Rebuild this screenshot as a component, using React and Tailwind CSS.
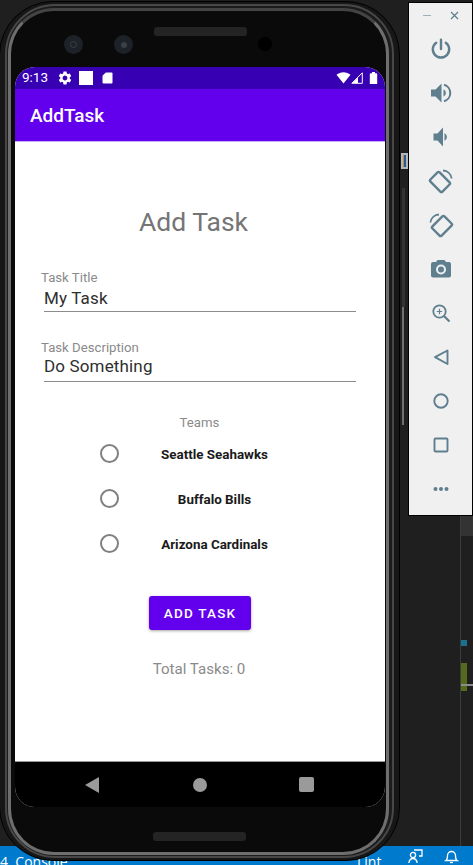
const c = "#5f7f8f";

function Ic({ children, size = 24 }) {
  return <svg width={size} height={size} viewBox={`0 0 ${size} ${size}`} fill="none">{children}</svg>;
}

function RotateIcon({ flip }) {
  return (
    <svg width="26" height="26" viewBox="0 0 26 26" fill="none" style={flip ? { transform: "scaleX(-1)" } : undefined}>
      <rect x="5.500" y="5.500" width="13" height="17" rx="1.500" transform="rotate(-45 12 14)" stroke={c} strokeWidth="2.400" />
      <path d="M15 2.500 C19.500 2.800 23 6 23.600 10.500" stroke={c} strokeWidth="1.800" />
    </svg>
  );
}

const tools = [
  <Ic key="p"><path d="M12 2.800v9.200" stroke={c} strokeWidth="2.400" strokeLinecap="round"/><path d="M7.200 5.700a8.200 8.200 0 1 0 9.600 0" stroke={c} strokeWidth="2.400" strokeLinecap="round"/></Ic>,
  <Ic key="u"><path d="M2 8.500v7h4.500l6 6v-19l-6 6z" fill={c}/><path d="M14.500 8.200a4.200 4.200 0 0 1 0 7.600z" fill={c}/><path d="M15 3.800a8.500 8.500 0 0 1 0 16.400" stroke={c} strokeWidth="2"/></Ic>,
  <Ic key="d"><path d="M4.500 8.500v7h4l5.500 6v-19l-5.500 6z" fill={c}/><path d="M15.500 8a4.500 4.500 0 0 1 0 8z" fill={c}/></Ic>,
  <RotateIcon key="r1" />,
  <RotateIcon key="r2" flip />,
  <Ic key="c"><path fillRule="evenodd" clipRule="evenodd" d="M8.500 3 7 5H4A2 2 0 0 0 2 7v11.500a2 2 0 0 0 2 2h16a2 2 0 0 0 2-2V7a2 2 0 0 0-2-2h-3l-1.500-2zM12 7.500a5 5 0 1 1 0 10 5 5 0 0 1 0-10zm0 2a3 3 0 1 0 0 6 3 3 0 0 0 0-6z" fill={c}/></Ic>,
  <Ic key="z" size={20}><circle cx="8.500" cy="8.500" r="6.200" stroke={c} strokeWidth="1.800"/><path d="M13 13l5.500 5.500" stroke={c} strokeWidth="2.200"/><path d="M5.800 8.500h5.400M8.500 5.800v5.400" stroke={c} strokeWidth="1.200"/></Ic>,
  <Ic key="b" size={20}><path d="M16.500 3.500v13.500L4 10.200z" stroke={c} strokeWidth="1.900" strokeLinejoin="round"/></Ic>,
  <Ic key="h" size={20}><circle cx="10" cy="10" r="6.700" stroke={c} strokeWidth="1.900"/></Ic>,
  <Ic key="s" size={20}><rect x="3.500" y="3.500" width="13" height="13" rx="1" stroke={c} strokeWidth="1.900"/></Ic>,
  <Ic key="m" size={20}><circle cx="4.500" cy="10" r="2" fill={c}/><circle cx="10" cy="10" r="2" fill={c}/><circle cx="15.500" cy="10" r="2" fill={c}/></Ic>,
];

function Field({ label, value, box }) {
  return (
    <div className="flex flex-col">
      <div className="pl-[26px] text-[13.200px] leading-[14px] text-[#8a8a8a]">{label}</div>
      <div className={`mx-[29px] h-[27px] border-b border-[#8c8c8c] text-[17px] leading-[22px] tracking-[0.15px] text-[#2e2e2e] ${box}`}>{value}</div>
    </div>
  );
}

function Team({ name }) {
  return (
    <div className="flex h-[45px] items-center">
      <div className="ml-[85px] h-[19px] w-[19px] rounded-full border-2 border-[#808080]" />
      <div className="w-[191px] pt-[3px] text-center text-[13.400px] font-bold text-[#1a1a1a]">{name}</div>
    </div>
  );
}

export default function App() {
  return (
    <div className="relative h-[865px] w-[473px] overflow-hidden bg-[#1f1f1f] font-['Roboto',sans-serif]">
      {/* IDE status bar behind the emulator */}
      <div className="absolute bottom-0 left-0 right-0 h-[19px] bg-[#007acc] font-['Open_Sans',sans-serif] text-[14px] text-white">
        <div className="flex h-full items-start whitespace-nowrap pt-[9px] leading-[14px]">
          <span className="w-[357px]">4. Console</span>
          <span>Lint</span>
        </div>
        <div className="absolute right-[50px] top-[3px]">
          <svg width="15" height="15" viewBox="0 0 15 15" fill="none" stroke="white" strokeWidth="1.300"><circle cx="5" cy="6" r="2.600"/><path d="M0.800 14c.5-3 2-4.500 4.200-4.500S8.700 11 9.200 14"/><path d="M6 1h8v6h-3"/></svg>
        </div>
        <div className="absolute right-[14px] top-[3px]">
          <svg width="15" height="15" viewBox="0 0 15 15" fill="none" stroke="white" strokeWidth="1.300"><path d="M2 11.500c1.500-1 1.500-3 1.500-5a4 4 0 0 1 8 0c0 2 0 4 1.500 5z"/><path d="M6 13.500h3"/></svg>
        </div>
      </div>

      <div className="relative flex h-full items-start">
        {/* Phone */}
        <div className="ml-[-1px] mt-[1px] h-[860px] w-[401px] shrink-0 rounded-[54px] border border-black bg-[#171717] px-[5px] pb-[2px] pt-[2px]">
          <div className="h-full w-full rounded-[50px] border-2 border-[#484848] bg-[#1c1c1c] pb-[1px] pl-[1px] pr-[3px] pt-[2px]">
            <div className="h-full w-full rounded-[46px] border-[3px] border-[#6e6e6e] border-t-[#444444] bg-[#0a0a0a] pl-[4px] pr-[1px]">
              <div className="flex h-full w-full flex-col">
                {/* Top bezel */}
                <div className="flex h-[56px] shrink-0 items-start">
                  <div className="ml-[49px] mt-[24px] flex h-[19px] w-[19px] items-center justify-center rounded-full bg-[#1c2228]"><div className="h-[7px] w-[7px] rounded-full border border-[#3a3f44]" /></div>
                  <div className="ml-[31px] mt-[24px] flex h-[19px] w-[19px] items-center justify-center rounded-full bg-[#1c2228]"><div className="h-[6px] w-[6px] rounded-full bg-[#3a4046]" /></div>
                  <div className="ml-[21px] mt-[16px] h-[9px] w-[93px] rounded-[3px] bg-[#242424]" />
                  <div className="ml-[11px] mt-[26px] h-[14px] w-[14px] rounded-full bg-black" />
                </div>

                {/* Screen */}
                <div className="flex h-[740px] w-[370px] shrink-0 flex-col overflow-hidden rounded-[20px] bg-white">
                  <div className="flex h-[22px] shrink-0 items-center bg-[#3700b3] pl-[7px] pr-[7px] text-white">
                    <span className="w-[35px] text-[13.500px] leading-none">9:13</span>
                    <svg width="16" height="16" viewBox="0 0 24 24" fill="white"><path d="M19.140 12.940c.04-.3.06-.61.06-.94 0-.32-.02-.64-.07-.94l2.030-1.580c.18-.14.23-.41.12-.61l-1.920-3.320c-.12-.22-.37-.29-.59-.22l-2.390.96c-.5-.38-1.030-.7-1.620-.94l-.36-2.540c-.04-.24-.24-.41-.48-.41h-3.840c-.24 0-.43.17-.47.41l-.36 2.540c-.59.24-1.130.57-1.620.94l-2.390-.96c-.22-.08-.47 0-.59.22L2.740 8.870c-.12.21-.08.47.12.61l2.030 1.580c-.05.3-.09.63-.09.94s.02.64.07.94l-2.030 1.580c-.18.14-.23.41-.12.61l1.920 3.320c.12.22.37.29.59.22l2.390-.96c.5.38 1.030.7 1.620.94l.36 2.540c.05.24.24.41.48.41h3.840c.24 0 .44-.17.47-.41l.36-2.540c.59-.24 1.130-.56 1.620-.94l2.390.96c.22.08.47 0 .59-.22l1.920-3.320c.12-.22.07-.47-.12-.61l-2.010-1.580zM12 15.600c-1.980 0-3.600-1.620-3.600-3.600s1.620-3.600 3.600-3.600 3.600 1.620 3.600 3.600-1.620 3.600-3.600 3.600z"/></svg>
                    <div className="ml-[6px] h-[14px] w-[14px] bg-white" />
                    <svg width="11" height="12" viewBox="0 0 11 12" fill="white" className="ml-[9px]"><path d="M3.800 0.500h5.700A1 1 0 0 1 10.500 1.500v9a1 1 0 0 1-1 1h-8a1 1 0 0 1-1-1V3.800z"/></svg>
                    <div className="flex-1" />
                    <svg width="15" height="12" viewBox="0 0 15 12" fill="white"><path d="M0.500 2.800C4.500-.6 10.500-.6 14.500 2.800L7.500 11.500z"/></svg>
                    <svg width="12" height="12" viewBox="0 0 12 12" fill="none"><path d="M11.300 0.800v10.500H.8z" stroke="white" strokeWidth="1"/><path d="M7 5.500v5.500H1.500z" fill="white"/></svg>
                    <svg width="9" height="12" viewBox="0 0 9 12" fill="white" className="ml-[6px]"><path d="M0.800 2.200a1 1 0 0 1 1-1H3V0h3v1.200h1.200a1 1 0 0 1 1 1V12H.8z"/></svg>
                  </div>
                  <div className="flex h-[52px] shrink-0 items-center bg-[#6200ee] pl-[15px] pt-[3px] text-[19px] font-medium text-white">AddTask</div>
                  <div className="h-[1px] shrink-0 bg-[#c7b0f5]" />

                  <div className="flex flex-1 flex-col bg-white">
                    <div className="mt-[65px] pr-[13px] text-center text-[26.500px] leading-[30px] text-[#757575]">Add Task</div>
                    <div className="mt-[34px]">
                      <Field label="Task Title" value="My Task" box="pt-[2px]" />
                    </div>
                    <div className="mt-[29px]">
                      <Field label="Task Description" value="Do Something" box="pt-0" />
                    </div>
                    <div className="mt-[33px] pr-[1px] text-center text-[13.200px] leading-[15px] text-[#8a8a8a]">Teams</div>
                    <div className="mt-[1px] flex flex-col">
                      <Team name="Seattle Seahawks" />
                      <Team name="Buffalo Bills" />
                      <Team name="Arizona Cardinals" />
                    </div>
                    <div className="ml-[134px] mt-[30px] flex h-[34px] w-[102px] items-center justify-center rounded-[3px] bg-[#6200ee] text-[13.500px] font-medium tracking-[1.200px] text-white shadow-[0_1px_3px_rgba(0,0,0,0.35)]">ADD TASK</div>
                    <div className="mt-[31px] pr-[2px] text-center text-[15.100px] leading-[17px] text-[#8a8a8a]">Total Tasks: 0</div>
                  </div>

                  <div className="flex h-[46px] shrink-0 items-center border-t border-[#9a9a9a] bg-black">
                    <svg width="14" height="16" viewBox="0 0 14 16" className="ml-[70px]"><path d="M14 0v16L0 8z" fill="#9a9a9a"/></svg>
                    <div className="ml-[94px] h-[14px] w-[14px] rounded-full bg-[#9a9a9a]" />
                    <div className="ml-[92px] h-[15px] w-[15px] rounded-[2px] bg-[#9a9a9a]" />
                  </div>
                </div>

                {/* Bottom bezel */}
                <div className="flex flex-1 justify-center pr-[1px] pt-[25px]">
                  <div className="h-[9px] w-[93px] rounded-[3px] bg-[#242424]" />
                </div>
              </div>
            </div>
          </div>
        </div>

        {/* Gutter */}
        <div className="flex h-full w-[8px] shrink-0 flex-col">
          <div className="ml-[1px] mt-[153px] flex h-[16px] w-[7px] border-2 border-[#aeb6be]">
            <div className="w-[1px] bg-[#c08a3c]" />
            <div className="flex-1 bg-[#2b5a8a]" />
          </div>
          <div className="ml-[2px] mt-[19px] h-[119px] w-[3px] bg-[#333333]" />
          <div className="ml-[2px] h-[118px] w-[2px] bg-[#707070]" />
        </div>

        {/* Emulator toolbar */}
        <div className="mt-[2px] flex h-[514px] w-[65px] shrink-0 flex-col border border-black bg-[#f0f0f0]">
          <div className="flex h-[24px] w-full shrink-0 items-center justify-center gap-[19px] pt-[1px]">
            <div className="h-[1px] w-[8px] bg-[#9fb0b8]" />
            <svg width="9" height="9" viewBox="0 0 9 9" stroke={c} strokeWidth="1.200"><path d="M1 1l7 7M8 1l-7 7"/></svg>
          </div>
          <div className="flex flex-col items-center">
            {tools.map((t) => <div key={t.key} className="flex h-[44px] items-center justify-center">{t}</div>)}
          </div>
        </div>

        {/* Editor minimap */}
        <div className="absolute left-[460px] top-[516px] h-[330px] w-[13px] border-l border-[#3c3c3c]">
          <div className="h-[20px] bg-[#333333]" />
          <div className="mt-[104px] h-[6px] w-[6px] bg-[#1b6f8f]" />
          <div className="relative mt-[17px] h-[28px] w-[6px] bg-[#556b1c]">
            <div className="absolute left-0 top-[21px] h-[2px] w-[12px] bg-[#8c8c8c]" />
          </div>
        </div>
      </div>
    </div>
  );
}
